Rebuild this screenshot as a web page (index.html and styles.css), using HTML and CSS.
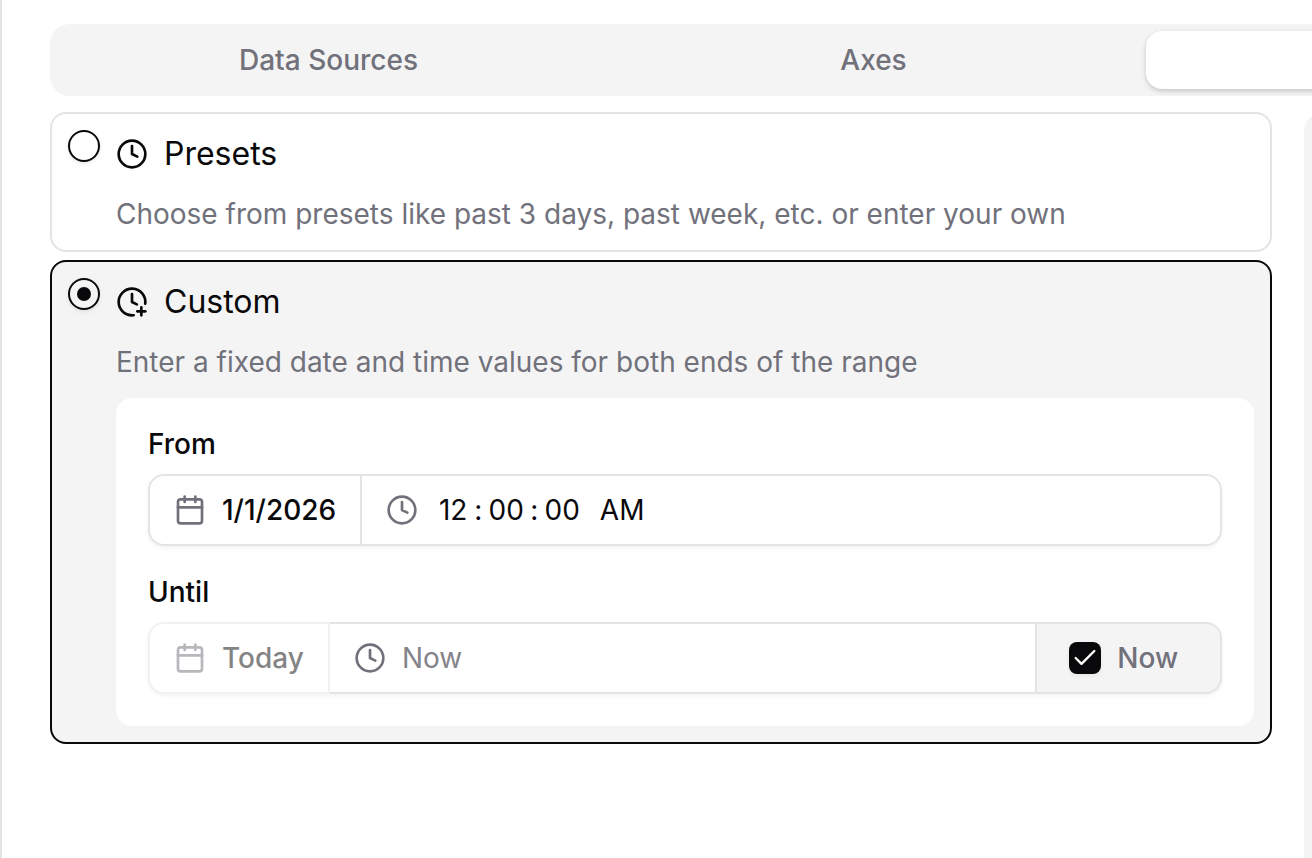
FILE: index.html
```html
<!DOCTYPE html>
<html lang="en">
<head>
    <meta charset="UTF-8">
    <meta name="viewport" content="width=device-width, initial-scale=1.0">
    <title>Time Range</title>
    <link rel="stylesheet" href="styles.css">
</head>
<body>
    <main class="panel">
        <div class="tabs" role="tablist">
            <button class="tab" type="button" role="tab" aria-selected="false">Data Sources</button>
            <button class="tab" type="button" role="tab" aria-selected="false">Axes</button>
            <button class="tab active" type="button" role="tab" aria-selected="true" aria-label="Range"></button>
        </div>

        <div class="columns">
            <form class="options">
                <div class="option">
                    <input class="radio" type="radio" name="range" id="presets">
                    <div class="option-body">
                        <label class="option-title" for="presets">
                            <svg class="icon" viewBox="0 0 24 24"><circle cx="12" cy="12" r="10"/><path d="M12 6v6l4 2"/></svg>
                            Presets
                        </label>
                        <p class="option-text">Choose from presets like past 3 days, past week, etc. or enter your own</p>
                    </div>
                </div>

                <div class="option selected">
                    <input class="radio" type="radio" name="range" id="custom" checked>
                    <div class="option-body">
                        <label class="option-title" for="custom">
                            <svg class="icon" viewBox="0 0 24 24"><path d="M12 6v6l3.644 1.822"/><path d="M16 19h6"/><path d="M19 16v6"/><path d="M21.92 13.267a10 10 0 1 0-8.653 8.653"/></svg>
                            Custom
                        </label>
                        <p class="option-text">Enter a fixed date and time values for both ends of the range</p>

                        <div class="range-box">
                            <div class="field">
                                <label class="field-label" for="fromDate">From</label>
                                <div class="input-group">
                                    <button class="date-btn" type="button" id="fromDate">
                                        <svg class="icon" viewBox="0 0 24 24"><path d="M8 2v4"/><path d="M16 2v4"/><rect x="3" y="4" width="18" height="18" rx="2"/><path d="M3 10h18"/></svg>
                                        1/1/2026
                                    </button>
                                    <div class="time">
                                        <svg class="icon" viewBox="0 0 24 24"><circle cx="12" cy="12" r="10"/><path d="M12 6v6l4 2"/></svg>
                                        <div class="segments">
                                            <input class="segment hour" type="text" value="12" aria-label="Hour">
                                            <span class="colon">:</span>
                                            <input class="segment" type="text" value="00" aria-label="Minute">
                                            <span class="colon">:</span>
                                            <input class="segment" type="text" value="00" aria-label="Second">
                                            <input class="segment period" type="text" value="AM" aria-label="AM or PM">
                                        </div>
                                    </div>
                                </div>
                            </div>

                            <div class="field">
                                <label class="field-label" for="untilTime">Until</label>
                                <div class="input-group">
                                    <button class="date-btn" type="button" disabled>
                                        <svg class="icon" viewBox="0 0 24 24"><path d="M8 2v4"/><path d="M16 2v4"/><rect x="3" y="4" width="18" height="18" rx="2"/><path d="M3 10h18"/></svg>
                                        Today
                                    </button>
                                    <div class="time">
                                        <svg class="icon" viewBox="0 0 24 24"><circle cx="12" cy="12" r="10"/><path d="M12 6v6l4 2"/></svg>
                                        <input class="time-input" type="text" id="untilTime" placeholder="Now">
                                    </div>
                                    <label class="now" for="now">
                                        <span class="check">
                                            <input class="checkbox" type="checkbox" id="now" checked>
                                            <svg class="tick" viewBox="0 0 24 24"><path d="M20 6 9 17l-5-5"/></svg>
                                        </span>
                                        Now
                                    </label>
                                </div>
                            </div>
                        </div>
                    </div>
                </div>
            </form>

            <aside class="preview"></aside>
        </div>
    </main>
</body>
</html>
```

FILE: styles.css
```css
* {
    box-sizing: border-box;
}
body {
    margin: 0;
    overflow: hidden;
    background-color: #fff;
    color: #09090b;
    font-family: Inter, Arial, sans-serif;
    font-size: 28px;
    line-height: 40px;
}
button,
input {
    margin: 0;
    font: inherit;
    color: inherit;
}
p {
    margin: 0;
}

/* the panel is wider than the window and runs off its right side */
.panel {
    display: flex;
    flex-direction: column;
    gap: 16px;
    width: 133%;
    min-height: 100vh;
    padding: 24px 48px 0;
    border-left: 2px solid #e4e4e4;
}

/* Tabs */
.tabs {
    display: flex;
    align-items: center;
    height: 72px;
    padding: 6px;
    border-radius: 20px;
    background-color: #f4f4f4;
}
.tab {
    flex: 1;
    height: 58px;
    padding: 0;
    border: none;
    border-radius: 16px;
    background: none;
    color: #71717b;
    font-weight: 500;
}
.tab.active {
    background-color: #fff;
    box-shadow: 0 2px 6px rgba(0,0,0,0.1), 0 2px 4px rgba(0,0,0,0.1);
}

.columns {
    flex: 1;
    display: grid;
    grid-template-columns: 28fr 9fr;
    gap: 32px;
}
.preview {
    border-radius: 20px 20px 0 0;
    background-color: #f4f4f4;
}

/* Options */
.options {
    display: flex;
    flex-direction: column;
    gap: 8px;
}
.option {
    display: flex;
    align-items: flex-start;
    gap: 16px;
    padding: 16px;
    border: 2px solid #e4e4e4;
    border-radius: 16px;
}
.option.selected {
    border-color: #09090b;
    background-color: #f4f4f4;
}
.option-body {
    flex: 1;
    display: flex;
    flex-direction: column;
    gap: 16px;
}
.option-title {
    display: flex;
    align-items: center;
    gap: 16px;
    font-size: 32px;
    line-height: 48px;
}
.option-text {
    color: #71717b;
}
.radio {
    appearance: none;
    display: grid;
    place-items: center;
    flex: none;
    width: 32px;
    height: 32px;
    border: 2px solid #09090b;
    border-radius: 50%;
    box-shadow: 0 2px 4px rgba(0,0,0,0.08);
}
.radio:checked::before {
    content: '';
    width: 14px;
    height: 14px;
    border-radius: 50%;
    background-color: #09090b;
}
.icon {
    flex: none;
    width: 32px;
    height: 32px;
    fill: none;
    stroke: currentColor;
    stroke-width: 2;
    stroke-linecap: round;
    stroke-linejoin: round;
}

/* Custom range */
.range-box {
    display: flex;
    flex-direction: column;
    gap: 32px;
    padding: 32px;
    border-radius: 16px;
    background-color: #fff;
}
.field {
    display: flex;
    flex-direction: column;
    gap: 16px;
}
.field-label {
    font-weight: 500;
    line-height: 28px;
}
.input-group {
    display: flex;
    height: 72px;
    border-radius: 16px;
    box-shadow: 0 2px 4px rgba(0,0,0,0.05);
}
.date-btn {
    display: flex;
    align-items: center;
    gap: 16px;
    padding: 0 24px;
    border: 2px solid #e4e4e4;
    border-radius: 16px 0 0 16px;
    background-color: #fff;
    font-weight: 500;
}
.date-btn .icon {
    color: #71717b;
}
.date-btn:disabled {
    color: #09090b;
    opacity: 0.5;
}
.time {
    flex: 1;
    display: flex;
    align-items: center;
    gap: 16px;
    padding: 0 24px;
    border: 2px solid #e4e4e4;
    border-left: none;
    background-color: #fff;
}
.time:last-child {
    border-radius: 0 16px 16px 0;
}
.time .icon {
    color: #71717b;
}
.time-input {
    flex: 1;
    min-width: 0;
    padding: 0;
    border: none;
    outline: none;
    background: none;
}
.time-input::placeholder {
    color: #84848a;
}
.segments {
    display: flex;
    align-items: center;
    padding-left: 4px;
}
.segment {
    width: 36px;
    padding: 0;
    border: none;
    outline: none;
    background: none;
    text-align: center;
}
.segment.hour {
    width: 30px;
}
.segment.period {
    width: 48px;
    margin-left: 18px;
}
.colon {
    width: 20px;
    text-align: center;
}

.now {
    display: flex;
    align-items: center;
    gap: 16px;
    padding: 0 42px 0 32px;
    border: 2px solid #e4e4e4;
    border-left: none;
    border-radius: 0 16px 16px 0;
    background-color: #f4f4f4;
    color: #71717b;
    font-weight: 500;
}
.check {
    display: grid;
    place-items: center;
}
.check > * {
    grid-area: 1 / 1;
}
.checkbox {
    appearance: none;
    width: 32px;
    height: 32px;
    border-radius: 8px;
    box-shadow: 0 2px 4px rgba(0,0,0,0.05);
}
.checkbox:checked {
    background-color: #09090b;
}
.tick {
    width: 28px;
    height: 28px;
    fill: none;
    stroke: #fff;
    stroke-width: 2;
    stroke-linecap: round;
    stroke-linejoin: round;
    pointer-events: none;
}
```
